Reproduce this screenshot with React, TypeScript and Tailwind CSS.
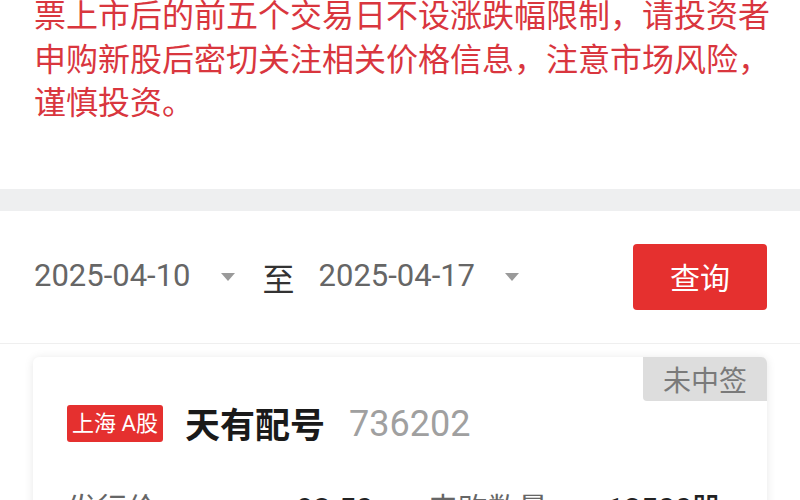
const CJK = "font-['Roboto','Noto_Sans_CJK_SC',sans-serif]"

function Caret() {
  return (
    <svg width="14" height="8" viewBox="0 0 14 8" className="shrink-0">
      <path d="M0 0 L14 0 L7 8 Z" fill="#9a9a9a" />
    </svg>
  )
}

export default function App() {
  return (
    <div className={`w-[800px] h-[500px] overflow-hidden bg-white ${CJK}`}>
      {/* 风险提示 */}
      <div className="pl-[34px] pb-[66px] -mt-[8px]">
        <p className="text-[32px] leading-[43.5px] text-[#d9363e] font-['Noto_Sans_CJK_SC',sans-serif] whitespace-nowrap">
          票上市后的前五个交易日不设涨跌幅限制，请投资者<br />
          申购新股后密切关注相关价格信息，注意市场风险，<br />
          谨慎投资。
        </p>
      </div>

      <div className="h-[22px] bg-[#eeeff0]" />

      {/* 日期筛选 */}
      <div className="h-[133px] flex items-center pl-[34px] pr-[33px] border-b border-[#efefef]">
        <span className="text-[31px] text-[#666] font-['Roboto',sans-serif]">2025-04-10</span>
        <span className="ml-[30px]"><Caret /></span>
        <span className="ml-[28px] text-[32px] text-[#333] font-['Noto_Sans_CJK_SC',sans-serif]">至</span>
        <span className="ml-[24px] text-[31px] text-[#666] font-['Roboto',sans-serif]">2025-04-17</span>
        <span className="ml-[30px]"><Caret /></span>
        <button className="ml-auto w-[134px] h-[66px] rounded-[4px] bg-[#e5302f] text-white text-[30px] font-['Noto_Sans_CJK_SC',sans-serif] flex items-center justify-center">
          查询
        </button>
      </div>

      {/* 申购记录 */}
      <div className="px-[33px] pt-[13px]">
        <div className="relative rounded-[6px] bg-white shadow-[0_1px_10px_rgba(0,0,0,0.10)] pt-[40px] pl-[34px] pr-[45px] pb-[30px]">
          <span className="absolute top-0 right-0 w-[124px] h-[44px] rounded-tr-[6px] rounded-bl-[4px] bg-[#dddddd] text-[#7a7a7a] text-[28px] flex items-center justify-center font-['Noto_Sans_CJK_SC',sans-serif]">
            未中签
          </span>
          <div className="flex items-center">
            <span className="w-[96px] h-[37px] rounded-[3px] bg-[#e5302f] text-white text-[22px] flex items-center justify-center whitespace-nowrap">
              上海 A股
            </span>
            <span className="ml-[22px] text-[35px] font-bold text-[#1a1a1a] font-['Noto_Sans_CJK_SC',sans-serif]">天有配号</span>
            <span className="ml-[24px] text-[36px] text-[#a0a0a0] font-['Roboto',sans-serif]">736202</span>
          </div>
          <div className="flex gap-[55px] mt-[38px] text-[30px] leading-[40px]">
            <div className="w-[306px] flex justify-between">
              <span className="text-[#666]">发行价</span>
              <span className="text-[#222] font-medium">93.50</span>
            </div>
            <div className="w-[294px] flex justify-between">
              <span className="text-[#666]">申购数量</span>
              <span className="text-[#222] font-medium">12500股</span>
            </div>
          </div>
        </div>
      </div>
    </div>
  )
}
